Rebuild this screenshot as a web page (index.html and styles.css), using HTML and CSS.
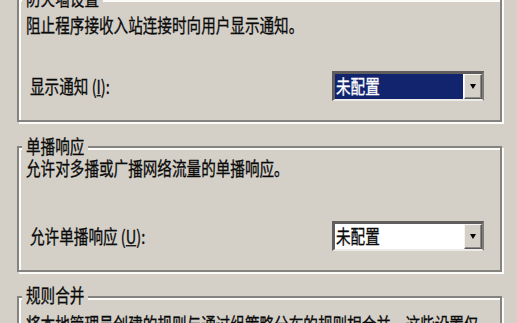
FILE: index.html
```html
<!DOCTYPE html>
<html lang="zh-CN">
<head>
<meta charset="utf-8">
<title>防火墙设置</title>
<link rel="stylesheet" href="styles.css">
</head>
<body>
<div class="page">
  <div class="group g1">
    <div class="legend"><span class="tx">防火墙设置</span></div>
    <p class="desc d1"><span class="tx">阻止程序接收入站连接时向用户显示通知。</span></p>
    <div class="row r1">
      <span class="label tx">显示通知 (<u>I</u>):</span>
      <div class="combo">
        <div class="field selected"><span class="tx">未配置</span></div>
        <div class="btn"><i class="arrow"></i></div>
      </div>
    </div>
  </div>
  <div class="group g2">
    <div class="legend"><span class="tx">单播响应</span></div>
    <p class="desc d2"><span class="tx">允许对多播或广播网络流量的单播响应。</span></p>
    <div class="row r2">
      <span class="label tx">允许单播响应 (<u>U</u>):</span>
      <div class="combo">
        <div class="field"><span class="tx">未配置</span></div>
        <div class="btn"><i class="arrow"></i></div>
      </div>
    </div>
  </div>
  <div class="group g3">
    <div class="legend"><span class="tx">规则合并</span></div>
    <p class="desc d3"><span class="tx">将本地管理员创建的规则与通过组策略分布的规则相合并，这些设置仅</span></p>
  </div>
</div>
</body>
</html>
```
FILE: styles.css
```css
html, body {
  margin: 0;
  padding: 0;
  height: 100%;
  overflow: hidden;
  background: #d4d0c8;
}
body {
  font-family: "Noto Sans CJK SC", "Noto Sans", sans-serif;
  font-size: 14.6px;
  line-height: 20px;
  color: #0a0a0a;
  -webkit-text-stroke: 0.25px #0a0a0a;
}
.page {
  margin-top: -2px;
  padding-left: 17px;
  width: 485px;
}
.tx {
  display: inline-block;
  transform: scaleY(1.3);
  white-space: nowrap;
}
.group {
  position: relative;
  box-sizing: border-box;
  width: 485px;
  border: 2px solid #858380;
  box-shadow: inset 2px 2px 0 #fbfbf9, 2px 2px 0 #fbfbf9;
  padding: 0 7px;
}
.g2, .g3 { margin-top: 24px; }
.legend {
  position: absolute;
  left: 3px;
  top: -12px;
  padding: 0 4px;
  height: 20px;
  background: #d4d0c8;
}
.g3 .legend { top: -13px; }
.desc {
  margin: 0;
  height: 20px;
  white-space: nowrap;
}
.d1 { padding-top: 15px; }
.d2 { padding-top: 10px; }
.d3 { padding-top: 16px; }
.row {
  display: flex;
  align-items: center;
  justify-content: space-between;
  padding: 0 9px 0 4px;
}
.r1 { margin-top: 36px; padding-bottom: 19px; }
.r2 { margin-top: 43px; padding-bottom: 19px; }
.label u { text-decoration: underline; }
.combo {
  display: flex;
  box-sizing: border-box;
  width: 152px;
  height: 30px;
  border-style: solid;
  border-width: 3px 2px 2px 3px;
  border-color: #5f5e5c #7d7c79 #ecebe8 #5f5e5c;
  background: #fff;
}
.field {
  flex: 1;
  padding-left: 1px;
  line-height: 24px;
  color: #0a0a0a;
}
.field.selected {
  background: #12246e;
  color: #fff;
  -webkit-text-stroke: 0.25px #fff;
}
.btn {
  box-sizing: border-box;
  width: 18px;
  margin-left: 1px;
  background: #d4d0c8;
  border: 1px solid;
  border-color: #f4f3f0 #5a5957 #5a5957 #f4f3f0;
  box-shadow: inset -1px -1px 0 #8c8a86;
  display: flex;
  align-items: center;
  justify-content: center;
}
.arrow {
  display: block;
  width: 0;
  height: 0;
  border-left: 3.5px solid transparent;
  border-right: 3.5px solid transparent;
  border-top: 5px solid #000;
}
```
